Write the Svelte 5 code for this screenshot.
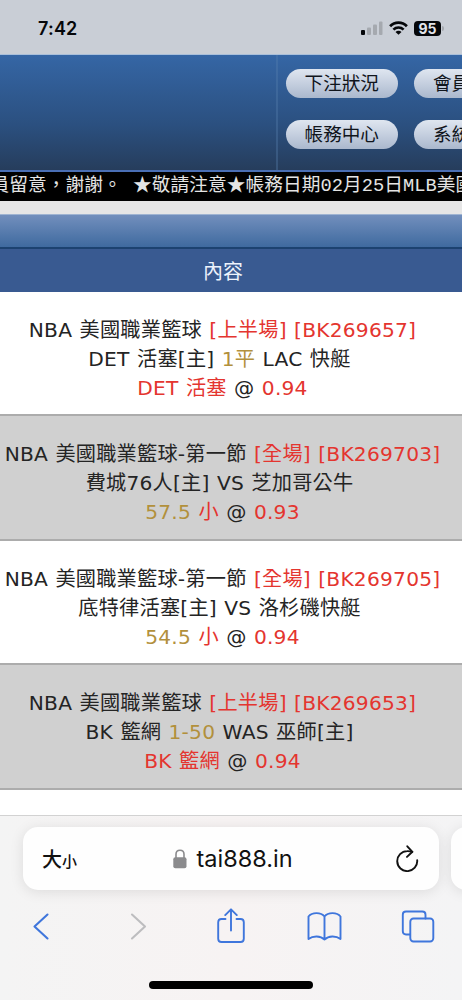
<script lang="ts">

	// Menu buttons, the right column runs off the screen
	const menu = [
		["下注狀況", "會員資料"],
		["帳務中心", "系統公告"]
	];

	// A coloured piece of a line
	interface Part {
		text: string
		color?: string
	}

	// Each bet has three lines
	const bets: Part[][][] = [
		[
			[{text: "NBA 美國職業籃球 "}, {text: "[上半場] [BK269657]", color: "red"}],
			[{text: "DET 活塞[主] "}, {text: "1平", color: "gold"}, {text: " LAC 快艇"}],
			[{text: "DET 活塞", color: "red"}, {text: " @ "}, {text: "0.94", color: "red"}]
		],
		[
			[{text: "NBA 美國職業籃球-第一節 "}, {text: "[全場] [BK269703]", color: "red"}],
			[{text: "費城76人[主] VS 芝加哥公牛"}],
			[{text: "57.5", color: "gold"}, {text: " 小", color: "red"}, {text: " @ "}, {text: "0.93", color: "red"}]
		],
		[
			[{text: "NBA 美國職業籃球-第一節 "}, {text: "[全場] [BK269705]", color: "red"}],
			[{text: "底特律活塞[主] VS 洛杉磯快艇"}],
			[{text: "54.5", color: "gold"}, {text: " 小", color: "red"}, {text: " @ "}, {text: "0.94", color: "red"}]
		],
		[
			[{text: "NBA 美國職業籃球 "}, {text: "[上半場] [BK269653]", color: "red"}],
			[{text: "BK 籃網 "}, {text: "1-50", color: "gold"}, {text: " WAS 巫師[主]"}],
			[{text: "BK 籃網", color: "red"}, {text: " @ "}, {text: "0.94", color: "red"}]
		]
	];

</script>

<main>
	<div class="status">
		<span class="time">7:42</span>
		<svg class="signal" width="22" height="14" viewBox="0 0 22 14">
			<rect x="0" y="9" width="4" height="5" rx="1" fill="#05070a" />
			<rect x="6" y="6.5" width="4" height="7.5" rx="1" fill="#a5a9af" />
			<rect x="12" y="3.5" width="4" height="10.5" rx="1" fill="#a5a9af" />
			<rect x="18" y="0.5" width="3.5" height="13.5" rx="1" fill="#a5a9af" />
		</svg>
		<svg class="wifi" width="19" height="14" viewBox="0 0 19 14" fill="none" stroke="#05070a" stroke-width="2.7">
			<path d="M1.1 5.2C5.8 0.3 13.2 0.3 17.9 5.2" />
			<path d="M4.4 8.6C7.3 5.8 11.7 5.8 14.6 8.6" />
			<path d="M9.5 13.8L6.5 10.9C8.2 9.3 10.8 9.3 12.5 10.9Z" fill="#05070a" stroke="none" />
		</svg>
		<span class="battery">95</span>
		<i class="cap"></i>
	</div>

	<header>
		<div class="logo"></div>
		<div class="menu">
			{#each menu as row}
			<div class="menu-row">
				{#each row as label}
				<button>{label}</button>
				{/each}
			</div>
			{/each}
		</div>
	</header>

	<div class="ticker">員留意，謝謝。&nbsp;★敬請注意★帳務日期02月25日MLB美國</div>
	<div class="gap"></div>
	<div class="bar"></div>

	<section>
		<div class="head">內容</div>
		{#each bets as bet}
		<div class="bet">
			{#each bet as line}
			<p>{#each line as part}<span class={part.color}>{part.text}</span>{/each}</p>
			{/each}
		</div>
		{/each}
	</section>

	<footer>
		<div class="tabs">
			<div class="address">
				<span class="size">大<small>小</small></span>
				<span class="url">
					<svg width="14" height="20" viewBox="0 0 14 20">
						<path d="M3 9V5.2C3 0 11 0 11 5.2V9" fill="none" stroke="#8b8b8d" stroke-width="1.6" />
						<rect x="0.3" y="8.2" width="13.2" height="11" rx="2" fill="#8b8b8d" />
					</svg>
					<span>tai888.in</span>
				</span>
				<svg class="reload" width="23" height="27" viewBox="0 0 23 27" fill="none" stroke="#111" stroke-width="1.9" stroke-linecap="round" stroke-linejoin="round">
					<path d="M21.2 15.3A10 10 0 1 1 11.2 6.1C13 6 14.5 6.3 16.2 6.9" />
					<path d="M11.3 1.3L16.4 6.8L11 11.9" />
				</svg>
			</div>
			<div class="next-tab"></div>
		</div>

		<nav>
			<svg width="36" height="36" viewBox="-1.5 0 36 36" class="icon">
				<path d="M22 6.5L9 18.5L22 30.5" stroke-width="2.1" />
			</svg>
			<svg width="36" height="36" viewBox="-4 0 36 36" class="icon off">
				<path d="M10 6.5L23 18.5L10 30.5" stroke-width="2.1" />
			</svg>
			<svg width="36" height="36" viewBox="-3 0 36 36" class="icon">
				<path d="M10.5 11H6.5Q3.2 11 3.2 14.3V30.7Q3.2 34 6.5 34H25.5Q28.8 34 28.8 30.7V14.3Q28.8 11 25.5 11H21.5" />
				<path d="M16 22.5V1.6M10.2 7.1L16 1.3L21.8 7.1" />
			</svg>
			<svg width="36" height="36" viewBox="-1 0 36 36" class="icon">
				<path d="M17.5 8.5C14 4 5 4 1.5 8.5V31C6 27.5 13.5 27.5 17.5 31.5C21.5 27.5 29 27.5 33.5 31V8.5C30 4 21 4 17.5 8.5V31.5" />
			</svg>
			<svg width="36" height="36" viewBox="-1 0 36 36" class="icon">
				<path d="M9 26.5H5Q1.8 26.5 1.8 23.3V6.7Q1.8 3.5 5 3.5H21.3Q24.5 3.5 24.5 6.7V10.5" />
				<rect x="9.3" y="10.5" width="23" height="23" rx="3.2" />
			</svg>
		</nav>
		<div class="home"></div>
	</footer>
</main>

<style>
	:global(body) {
		margin: 0;
		background: #fff;
	}

	main {
		display: flex;
		flex-direction: column;
		width: 462px;
		height: 1000px;
		overflow: hidden;
		font-family: "DejaVu Sans", "Noto Sans CJK TC", sans-serif;
	}

	/* Phone status bar */
	.status {
		display: flex;
		align-items: center;
		box-sizing: border-box;
		height: 55px;
		padding: 2px 18px 0 38px;
		background: #c9ced6;
		border-bottom: 1px solid #a9bfda;
		color: #05070a;
		font-family: Inter, sans-serif;
	}

	.time {
		flex: 1;
		font-size: 18px;
		font-weight: 600;
		letter-spacing: 0.2px;
	}

	.wifi {
		margin: 0 6px;
	}

	.battery {
		width: 27px;
		height: 15px;
		border-radius: 4px;
		background: #05070a;
		color: #e2e5ea;
		font-size: 14px;
		font-weight: 700;
		line-height: 15px;
		text-align: center;
	}

	.cap {
		width: 2px;
		height: 5px;
		margin-left: 1px;
		border-radius: 0 2px 2px 0;
		background: #a5a9af;
	}

	/* Site header */
	header {
		display: flex;
		box-sizing: border-box;
		height: 117px;
		border-bottom: 2px solid #4a6fb5;
		background: linear-gradient(#3566a5, #2b5080 60%, #263d5c);
	}

	.logo {
		box-sizing: border-box;
		flex: none;
		width: 278px;
		border-right: 2px solid rgba(90, 130, 175, 0.35);
	}

	.menu {
		display: flex;
		flex-direction: column;
		gap: 22px;
		padding: 14px 0 0 7.5px;
	}

	.menu-row {
		display: flex;
		gap: 16px;
	}

	button {
		flex: none;
		width: 112.5px;
		height: 29px;
		padding: 0 0 4px;
		border: 0;
		border-radius: 15px;
		background: linear-gradient(#dfe6f0, #c5cfdf 50%, #aab8cd);
		color: #10151c;
		font-family: "Noto Sans CJK TC", sans-serif;
		font-size: 18.6px;
		line-height: 25px;
		white-space: nowrap;
	}

	.ticker {
		height: 29px;
		background: #000;
		color: #e4e4e4;
		font-family: "Liberation Mono", "Noto Sans CJK TC", monospace;
		font-size: 18.7px;
		line-height: 29px;
		text-indent: -9.6px;
		letter-spacing: 0.06px;
		white-space: nowrap;
		overflow: hidden;
	}

	.gap {
		height: 13px;
		background: #e6e6e6;
	}

	.bar {
		box-sizing: border-box;
		height: 35px;
		border-top: 1px solid #9fb4d2;
		border-bottom: 2px solid #1c4270;
		background: linear-gradient(#728fbd, #3f6a9f);
	}

	/* Bets */
	section {
		flex: 1;
	}

	.head {
		height: 43px;
		background: #395a91;
		color: #edf3fc;
		font-size: 20px;
		line-height: 46px;
		text-align: center;
		text-indent: -16px;
	}

	.bet {
		box-sizing: border-box;
		height: 124.4px;
		padding: 24px 17px 0 0;
		border-bottom: 2px solid #acacac;
		color: #242424;
		font-size: 20.2px;
		letter-spacing: 0.22px;
		text-align: center;
		white-space: nowrap;
		word-spacing: 0.7px;
	}

	.bet:nth-child(odd) {
		background: #d0d0d0;
	}

	p {
		margin: 0;
		height: 29px;
		line-height: 29px;
	}

	/* The teams sit a bit to the left */
	p:nth-child(2) {
		padding-right: 6px;
	}

	.red {
		color: #e4352f;
	}

	.gold {
		color: #b2903c;
	}

	/* Browser toolbar */
	footer {
		box-sizing: border-box;
		height: 185px;
		border-top: 1px solid #d2d2d2;
		background: linear-gradient(90deg, #f4f4f4, #f7f3f3 50%, #f4f4f5);
	}

	.tabs {
		display: flex;
		gap: 12px;
		padding: 11px 0 0 23px;
	}

	.address, .next-tab {
		flex: none;
		box-sizing: border-box;
		height: 63px;
		border-radius: 15px;
		background: #fefefe;
		box-shadow: 0 2px 14px rgba(0, 0, 0, 0.1);
	}

	.address {
		display: flex;
		align-items: center;
		justify-content: space-between;
		width: 416px;
		padding: 0 20px 0 19px;
		color: #111;
	}

	.next-tab {
		width: 60px;
	}

	.size {
		font-family: "Noto Sans CJK TC", sans-serif;
		font-size: 20px;
		font-weight: 500;
	}

	small {
		font-size: 15px;
	}

	.url {
		display: flex;
		align-items: center;
		gap: 9px;
		margin-right: 7px;
		font-family: Inter, sans-serif;
		font-size: 23.5px;
	}

	nav {
		display: flex;
		justify-content: space-between;
		padding: 18px 26px 0 24px;
	}

	.icon {
		fill: none;
		stroke: #3f76dc;
		stroke-width: 1.9;
		stroke-linecap: round;
		stroke-linejoin: round;
	}

	.off {
		stroke: #bdbdbf;
	}

	.home {
		width: 164px;
		height: 8px;
		margin: 37px auto 0;
		border-radius: 4px;
		background: #000;
	}
</style>
